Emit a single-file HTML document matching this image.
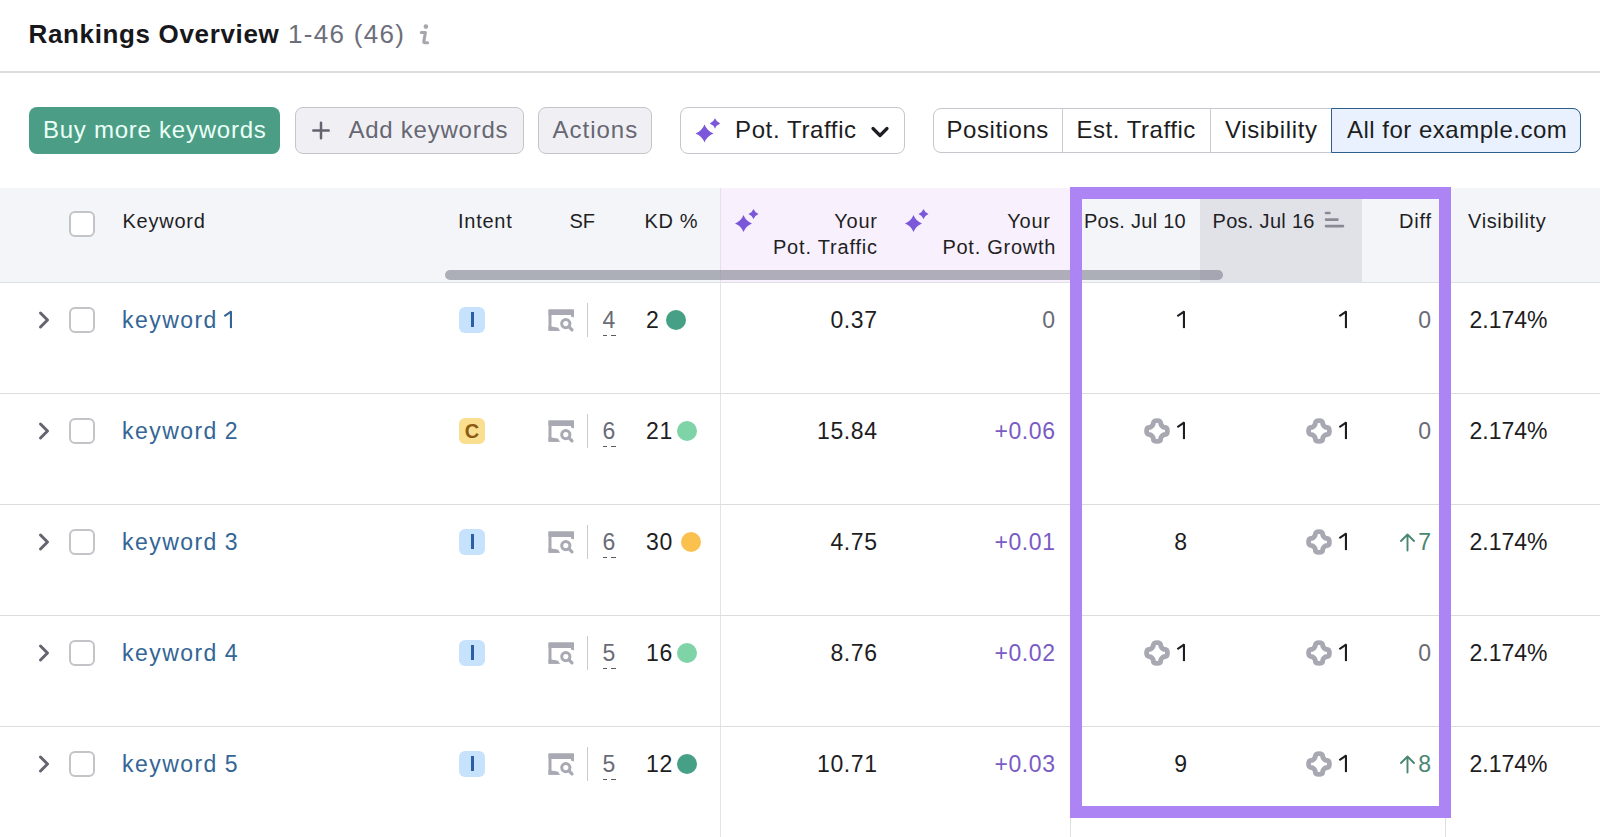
<!DOCTYPE html>
<html><head><meta charset="utf-8"><title>Rankings Overview</title>
<style>
html,body{margin:0;padding:0;background:#fff;width:1600px;height:837px;overflow:hidden;position:relative}
body{font-family:"Liberation Sans", sans-serif}
.t{position:absolute;white-space:nowrap;font-family:"Liberation Sans", sans-serif}
</style></head><body>
<div class="t" style="left:28.50px;top:21.49px;font-size:26px;line-height:26px;color:#17171c;font-weight:700;letter-spacing:0.65px;">Rankings Overview</div>
<div class="t" style="left:288.00px;top:21.49px;font-size:26px;line-height:26px;color:#6c6e79;font-weight:400;letter-spacing:1.3px;">1-46 (46)</div>
<svg style="position:absolute;left:417px;top:22px" width="14" height="24" viewBox="0 0 14 24"><circle cx="8.9" cy="4.6" r="2.3" fill="#a6a7ad"/><path d="M4.3 10.5 L8.4 10.5 L6.8 19.6 Q6.6 20.8 8 20.8 L10.6 20.8" stroke="#a6a7ad" stroke-width="3.1" fill="none" stroke-linecap="round" stroke-linejoin="round"/></svg>
<div style="position:absolute;left:0px;top:71px;width:1600px;height:1.5px;background:#dcdcdf"></div>
<div style="position:absolute;left:29px;top:107px;width:251px;height:46.5px;background:#4b9e85;border-radius:8px"></div>
<div class="t" style="left:43.00px;top:117.68px;font-size:24px;line-height:24px;color:#ecfff7;font-weight:400;letter-spacing:0.75px;">Buy more keywords</div>
<div style="position:absolute;left:294.5px;top:107px;width:229px;height:46.5px;background:#f0f0f4;border:1.6px solid #c4c4cb;border-radius:8px;box-sizing:border-box"></div>
<svg style="position:absolute;left:311px;top:121px" width="20" height="19" viewBox="0 0 20 19"><path d="M10 1.8 V17.2 M2.3 9.5 H17.7" stroke="#62636e" stroke-width="2.5" stroke-linecap="round"/></svg>
<div class="t" style="left:348.50px;top:117.68px;font-size:24px;line-height:24px;color:#666773;font-weight:400;letter-spacing:0.75px;">Add keywords</div>
<div style="position:absolute;left:538px;top:107px;width:114px;height:46.5px;background:#f0f0f4;border:1.6px solid #c4c4cb;border-radius:8px;box-sizing:border-box"></div>
<div class="t" style="left:552.50px;top:117.68px;font-size:24px;line-height:24px;color:#666773;font-weight:400;letter-spacing:1.0px;">Actions</div>
<div style="position:absolute;left:680px;top:107px;width:224.5px;height:46.5px;background:#ffffff;border:1.6px solid #c6c6cc;border-radius:8px;box-sizing:border-box"></div>
<svg style="position:absolute;left:694px;top:117px" width="30" height="28" viewBox="0 0 30 28"><path d="M10.5 7.5 Q13.02 13.98 19.5 16.5 Q13.02 19.02 10.5 25.5 Q7.9799999999999995 19.02 1.5 16.5 Q7.9799999999999995 13.98 10.5 7.5 Z" fill="#7b57d9"/><path d="M21 1.2999999999999998 Q22.456 5.044 26.2 6.5 Q22.456 7.956 21 11.7 Q19.544 7.956 15.8 6.5 Q19.544 5.044 21 1.2999999999999998 Z" fill="#7b57d9"/></svg>
<div class="t" style="left:735.00px;top:117.68px;font-size:24px;line-height:24px;color:#1d1d22;font-weight:400;letter-spacing:0.62px;">Pot. Traffic</div>
<svg style="position:absolute;left:870px;top:125px" width="20" height="14" viewBox="0 0 20 14"><path d="M3 3.5 L10 10.5 L17 3.5" stroke="#1d1d22" stroke-width="3.2" fill="none" stroke-linecap="round" stroke-linejoin="round"/></svg>
<div style="position:absolute;left:933px;top:107.5px;width:648px;height:45.5px;background:#fff;border:1.6px solid #c6c6cc;border-radius:8px;box-sizing:border-box"></div>
<div style="position:absolute;left:1061.5px;top:107.5px;width:1.5px;height:45.5px;background:#c9c9cf"></div>
<div style="position:absolute;left:1209.5px;top:107.5px;width:1.5px;height:45.5px;background:#c9c9cf"></div>
<div style="position:absolute;left:1330.5px;top:107.5px;width:250.5px;height:45.5px;background:#e8f1fd;border:1.6px solid #2d5f8c;border-radius:0 8px 8px 0;box-sizing:border-box"></div>
<div class="t" style="left:946.50px;top:117.68px;font-size:24px;line-height:24px;color:#1d1d22;font-weight:400;letter-spacing:0.55px;">Positions</div>
<div class="t" style="left:1076.50px;top:117.68px;font-size:24px;line-height:24px;color:#1d1d22;font-weight:400;letter-spacing:0.53px;">Est. Traffic</div>
<div class="t" style="left:1225.00px;top:117.68px;font-size:24px;line-height:24px;color:#1d1d22;font-weight:400;letter-spacing:0.65px;">Visibility</div>
<div class="t" style="left:1347.00px;top:117.68px;font-size:24px;line-height:24px;color:#1d1d22;font-weight:400;letter-spacing:0.5px;">All for example.com</div>
<div style="position:absolute;left:0px;top:187.5px;width:1600px;height:94.5px;background:#f4f5f9"></div>
<div style="position:absolute;left:720px;top:187.5px;width:350px;height:94.5px;background:#f8f1fd"></div>
<div style="position:absolute;left:1199.5px;top:187.5px;width:162px;height:94.5px;background:#e1e1e8"></div>
<div style="position:absolute;left:0px;top:282px;width:1600px;height:1px;background:#dfe0e6"></div>
<div style="position:absolute;left:719.5px;top:187.5px;width:1.5px;height:650px;background:#e3e3e8"></div>
<div style="position:absolute;left:69px;top:211px;width:26px;height:26px;background:#fff;border:2px solid #c3c3c8;border-radius:6px;box-sizing:border-box"></div>
<div class="t" style="left:122.50px;top:210.57px;font-size:20px;line-height:20px;color:#1f1f24;font-weight:400;letter-spacing:0.75px;">Keyword</div>
<div class="t" style="left:458.00px;top:210.57px;font-size:20px;line-height:20px;color:#1f1f24;font-weight:400;letter-spacing:0.75px;">Intent</div>
<div class="t" style="left:569.50px;top:210.57px;font-size:20px;line-height:20px;color:#1f1f24;font-weight:400;letter-spacing:0px;">SF</div>
<div class="t" style="left:644.50px;top:210.57px;font-size:20px;line-height:20px;color:#1f1f24;font-weight:400;letter-spacing:0.6px;">KD %</div>
<svg style="position:absolute;left:734px;top:208px" width="28" height="26" viewBox="0 0 28 26"><path d="M9.5 7.0 Q11.88 13.12 18.0 15.5 Q11.88 17.88 9.5 24.0 Q7.119999999999999 17.88 1.0 15.5 Q7.119999999999999 13.12 9.5 7.0 Z" fill="#7b57d9"/><path d="M19.5 1 Q20.9 4.6 24.5 6 Q20.9 7.4 19.5 11 Q18.1 7.4 14.5 6 Q18.1 4.6 19.5 1 Z" fill="#7b57d9"/></svg>
<div class="t" style="right:722.25px;text-align:right;top:210.57px;font-size:20px;line-height:20px;color:#1f1f24;font-weight:400;letter-spacing:0.75px;">Your</div>
<div class="t" style="right:722.20px;text-align:right;top:237.17px;font-size:20px;line-height:20px;color:#1f1f24;font-weight:400;letter-spacing:0.8px;">Pot. Traffic</div>
<svg style="position:absolute;left:904px;top:208px" width="28" height="26" viewBox="0 0 28 26"><path d="M9.5 7.0 Q11.88 13.12 18.0 15.5 Q11.88 17.88 9.5 24.0 Q7.119999999999999 17.88 1.0 15.5 Q7.119999999999999 13.12 9.5 7.0 Z" fill="#7b57d9"/><path d="M19.5 1 Q20.9 4.6 24.5 6 Q20.9 7.4 19.5 11 Q18.1 7.4 14.5 6 Q18.1 4.6 19.5 1 Z" fill="#7b57d9"/></svg>
<div class="t" style="right:549.25px;text-align:right;top:210.57px;font-size:20px;line-height:20px;color:#1f1f24;font-weight:400;letter-spacing:0.75px;">Your</div>
<div class="t" style="right:543.75px;text-align:right;top:237.17px;font-size:20px;line-height:20px;color:#1f1f24;font-weight:400;letter-spacing:0.75px;">Pot. Growth</div>
<div class="t" style="left:1084.00px;top:210.57px;font-size:20px;line-height:20px;color:#1f1f24;font-weight:400;letter-spacing:0.28px;">Pos. Jul 10</div>
<div class="t" style="left:1212.50px;top:210.57px;font-size:20px;line-height:20px;color:#1f1f24;font-weight:400;letter-spacing:0.3px;">Pos. Jul 16</div>
<svg style="position:absolute;left:1323px;top:209px" width="24" height="20" viewBox="0 0 24 20"><path d="M3 4 H6.5 M3 10.6 H14.5 M3 17.1 H20" stroke="#8a8a94" stroke-width="2.6" stroke-linecap="round"/></svg>
<div class="t" style="right:168.25px;text-align:right;top:210.57px;font-size:20px;line-height:20px;color:#1f1f24;font-weight:400;letter-spacing:0.75px;">Diff</div>
<div class="t" style="left:1468.00px;top:210.57px;font-size:20px;line-height:20px;color:#1f1f24;font-weight:400;letter-spacing:0.65px;">Visibility</div>
<div style="position:absolute;left:445px;top:270px;width:778px;height:10px;background:rgba(118,120,134,0.56);border-radius:5px"></div>
<div style="position:absolute;left:0px;top:393px;width:1600px;height:1px;background:#dcdce1"></div>
<div style="position:absolute;left:0px;top:504px;width:1600px;height:1px;background:#dcdce1"></div>
<div style="position:absolute;left:0px;top:615px;width:1600px;height:1px;background:#dcdce1"></div>
<div style="position:absolute;left:0px;top:726px;width:1600px;height:1px;background:#dcdce1"></div>
<svg style="position:absolute;left:36px;top:310px" width="16" height="20" viewBox="0 0 16 20"><path d="M4.5 3 L11.5 10 L4.5 17" stroke="#65656f" stroke-width="3" fill="none" stroke-linecap="round" stroke-linejoin="round"/></svg>
<div style="position:absolute;left:69px;top:307px;width:26px;height:26px;background:#fff;border:2px solid #c3c3c8;border-radius:6px;box-sizing:border-box"></div>
<div class="t" style="left:122.00px;top:308.73px;font-size:23px;line-height:23px;color:#336596;font-weight:400;letter-spacing:1.45px;">keyword</div>
<svg style="position:absolute;left:222.3px;top:308px" width="12" height="24" viewBox="0 0 12 24"><path d="M8.95 3.6 V20.1" stroke="#336596" stroke-width="2.1" stroke-linecap="butt"/><path d="M3.2 7.6 L8.55 3.9" stroke="#336596" stroke-width="2.1" stroke-linecap="square"/><rect x="7.90" y="3.4" width="2.1" height="1.2" fill="#336596"/></svg>
<div style="position:absolute;left:459px;top:307px;width:26px;height:26px;background:#c7e2fc;border-radius:6px"></div>
<div style="position:absolute;left:470.7px;top:312px;width:3px;height:14.5px;background:#2d5ea3"></div>
<svg style="position:absolute;left:547.5px;top:309px" width="27" height="24" viewBox="0 0 27 24"><path d="M10.5 20.2 H2 V2 H24.5 V7.8" stroke="#a9a9b3" stroke-width="3" fill="none" stroke-linejoin="miter"/><rect x="0.5" y="0.5" width="25.5" height="5.5" rx="1" fill="#a9a9b3"/><path d="M22 5 L25.5 5 L25.5 9 Z" fill="#a9a9b3"/><path d="M0.5 17 L0.5 21.7 L12.5 21.7 L9 18.5 Z" fill="#a9a9b3"/><circle cx="17.8" cy="14.6" r="4.1" stroke="#a9a9b3" stroke-width="3" fill="none"/><path d="M20.8 17.6 L24 20.8" stroke="#a9a9b3" stroke-width="3.2" stroke-linecap="round"/></svg>
<div style="position:absolute;left:586.5px;top:303px;width:1.5px;height:33.5px;background:#c9c9ce"></div>
<div class="t" style="left:602.50px;top:308.73px;font-size:23px;line-height:23px;color:#6a6b75;font-weight:400;letter-spacing:0px;">4</div>
<div style="position:absolute;left:602.5px;top:335px;width:4px;height:1.2px;background:#5a5a63"></div>
<div style="position:absolute;left:611px;top:335px;width:5px;height:1.2px;background:#5a5a63"></div>
<div class="t" style="left:646.00px;top:308.73px;font-size:23px;line-height:23px;color:#1d1d22;font-weight:400;letter-spacing:0.6px;">2</div>
<div style="position:absolute;left:666px;top:310px;width:20px;height:20px;background:#46a085;border-radius:50%"></div>
<div class="t" style="right:722.40px;text-align:right;top:308.73px;font-size:23px;line-height:23px;color:#1d1d22;font-weight:400;letter-spacing:0.6px;">0.37</div>
<div class="t" style="right:544.40px;text-align:right;top:308.73px;font-size:23px;line-height:23px;color:#6a6b75;font-weight:400;letter-spacing:0.6px;">0</div>
<svg style="position:absolute;left:1175.2px;top:308px" width="12" height="24" viewBox="0 0 12 24"><path d="M8.95 3.6 V20.1" stroke="#1d1d22" stroke-width="2.1" stroke-linecap="butt"/><path d="M3.2 7.6 L8.55 3.9" stroke="#1d1d22" stroke-width="2.1" stroke-linecap="square"/><rect x="7.90" y="3.4" width="2.1" height="1.2" fill="#1d1d22"/></svg>
<svg style="position:absolute;left:1337.2px;top:308px" width="12" height="24" viewBox="0 0 12 24"><path d="M8.95 3.6 V20.1" stroke="#1d1d22" stroke-width="2.1" stroke-linecap="butt"/><path d="M3.2 7.6 L8.55 3.9" stroke="#1d1d22" stroke-width="2.1" stroke-linecap="square"/><rect x="7.90" y="3.4" width="2.1" height="1.2" fill="#1d1d22"/></svg>
<div class="t" style="right:169.00px;text-align:right;top:308.73px;font-size:23px;line-height:23px;color:#6a6b75;font-weight:400;letter-spacing:0px;">0</div>
<div class="t" style="left:1469.50px;top:308.73px;font-size:23px;line-height:23px;color:#1d1d22;font-weight:400;letter-spacing:0px;">2.174%</div>
<svg style="position:absolute;left:36px;top:421px" width="16" height="20" viewBox="0 0 16 20"><path d="M4.5 3 L11.5 10 L4.5 17" stroke="#65656f" stroke-width="3" fill="none" stroke-linecap="round" stroke-linejoin="round"/></svg>
<div style="position:absolute;left:69px;top:418px;width:26px;height:26px;background:#fff;border:2px solid #c3c3c8;border-radius:6px;box-sizing:border-box"></div>
<div class="t" style="left:122.00px;top:419.73px;font-size:23px;line-height:23px;color:#336596;font-weight:400;letter-spacing:1.45px;">keyword</div>
<div class="t" style="right:1362.40px;text-align:right;top:419.73px;font-size:23px;line-height:23px;color:#336596;font-weight:400;letter-spacing:0px;">2</div>
<div style="position:absolute;left:459px;top:418px;width:26px;height:26px;background:#f9df8f;border-radius:6px"></div>
<div class="t" style="left:472.00px;top:421.47px;font-size:20px;line-height:20px;color:#8b5a12;font-weight:700;letter-spacing:0px;width:0;text-align:center;display:flex;justify-content:center">C</div>
<svg style="position:absolute;left:547.5px;top:420px" width="27" height="24" viewBox="0 0 27 24"><path d="M10.5 20.2 H2 V2 H24.5 V7.8" stroke="#a9a9b3" stroke-width="3" fill="none" stroke-linejoin="miter"/><rect x="0.5" y="0.5" width="25.5" height="5.5" rx="1" fill="#a9a9b3"/><path d="M22 5 L25.5 5 L25.5 9 Z" fill="#a9a9b3"/><path d="M0.5 17 L0.5 21.7 L12.5 21.7 L9 18.5 Z" fill="#a9a9b3"/><circle cx="17.8" cy="14.6" r="4.1" stroke="#a9a9b3" stroke-width="3" fill="none"/><path d="M20.8 17.6 L24 20.8" stroke="#a9a9b3" stroke-width="3.2" stroke-linecap="round"/></svg>
<div style="position:absolute;left:586.5px;top:414px;width:1.5px;height:33.5px;background:#c9c9ce"></div>
<div class="t" style="left:602.50px;top:419.73px;font-size:23px;line-height:23px;color:#6a6b75;font-weight:400;letter-spacing:0px;">6</div>
<div style="position:absolute;left:602.5px;top:446px;width:4px;height:1.2px;background:#5a5a63"></div>
<div style="position:absolute;left:611px;top:446px;width:5px;height:1.2px;background:#5a5a63"></div>
<div class="t" style="left:646.00px;top:419.73px;font-size:23px;line-height:23px;color:#1d1d22;font-weight:400;letter-spacing:0.6px;">21</div>
<div style="position:absolute;left:677px;top:421px;width:20px;height:20px;background:#7ed4a6;border-radius:50%"></div>
<div class="t" style="right:722.40px;text-align:right;top:419.73px;font-size:23px;line-height:23px;color:#1d1d22;font-weight:400;letter-spacing:0.6px;">15.84</div>
<div class="t" style="right:544.40px;text-align:right;top:419.73px;font-size:23px;line-height:23px;color:#7a5bc4;font-weight:400;letter-spacing:0.6px;">+0.06</div>
<svg style="position:absolute;left:1141.5px;top:416px" width="30" height="30" viewBox="0 0 30 30"><path d="M11.20 8.00 C11.20 5.11 12.91 4.60 15.00 4.60 C17.09 4.60 18.80 5.11 18.80 8.00 C18.90 9.00 21.00 11.10 22.00 11.20 C24.89 11.20 25.40 12.91 25.40 15.00 C25.40 17.09 24.89 18.80 22.00 18.80 C21.00 18.90 18.90 21.00 18.80 22.00 C18.80 24.89 17.09 25.40 15.00 25.40 C12.91 25.40 11.20 24.89 11.20 22.00 C11.10 21.00 9.00 18.90 8.00 18.80 C5.11 18.80 4.60 17.09 4.60 15.00 C4.60 12.91 5.11 11.20 8.00 11.20 C9.00 11.10 11.10 9.00 11.20 8.00 Z" stroke="#a8a8b2" stroke-width="4.9" fill="none" stroke-linejoin="round"/></svg>
<svg style="position:absolute;left:1175.2px;top:419px" width="12" height="24" viewBox="0 0 12 24"><path d="M8.95 3.6 V20.1" stroke="#1d1d22" stroke-width="2.1" stroke-linecap="butt"/><path d="M3.2 7.6 L8.55 3.9" stroke="#1d1d22" stroke-width="2.1" stroke-linecap="square"/><rect x="7.90" y="3.4" width="2.1" height="1.2" fill="#1d1d22"/></svg>
<svg style="position:absolute;left:1303.5px;top:416px" width="30" height="30" viewBox="0 0 30 30"><path d="M11.20 8.00 C11.20 5.11 12.91 4.60 15.00 4.60 C17.09 4.60 18.80 5.11 18.80 8.00 C18.90 9.00 21.00 11.10 22.00 11.20 C24.89 11.20 25.40 12.91 25.40 15.00 C25.40 17.09 24.89 18.80 22.00 18.80 C21.00 18.90 18.90 21.00 18.80 22.00 C18.80 24.89 17.09 25.40 15.00 25.40 C12.91 25.40 11.20 24.89 11.20 22.00 C11.10 21.00 9.00 18.90 8.00 18.80 C5.11 18.80 4.60 17.09 4.60 15.00 C4.60 12.91 5.11 11.20 8.00 11.20 C9.00 11.10 11.10 9.00 11.20 8.00 Z" stroke="#a8a8b2" stroke-width="4.9" fill="none" stroke-linejoin="round"/></svg>
<svg style="position:absolute;left:1337.2px;top:419px" width="12" height="24" viewBox="0 0 12 24"><path d="M8.95 3.6 V20.1" stroke="#1d1d22" stroke-width="2.1" stroke-linecap="butt"/><path d="M3.2 7.6 L8.55 3.9" stroke="#1d1d22" stroke-width="2.1" stroke-linecap="square"/><rect x="7.90" y="3.4" width="2.1" height="1.2" fill="#1d1d22"/></svg>
<div class="t" style="right:169.00px;text-align:right;top:419.73px;font-size:23px;line-height:23px;color:#6a6b75;font-weight:400;letter-spacing:0px;">0</div>
<div class="t" style="left:1469.50px;top:419.73px;font-size:23px;line-height:23px;color:#1d1d22;font-weight:400;letter-spacing:0px;">2.174%</div>
<svg style="position:absolute;left:36px;top:532px" width="16" height="20" viewBox="0 0 16 20"><path d="M4.5 3 L11.5 10 L4.5 17" stroke="#65656f" stroke-width="3" fill="none" stroke-linecap="round" stroke-linejoin="round"/></svg>
<div style="position:absolute;left:69px;top:529px;width:26px;height:26px;background:#fff;border:2px solid #c3c3c8;border-radius:6px;box-sizing:border-box"></div>
<div class="t" style="left:122.00px;top:530.73px;font-size:23px;line-height:23px;color:#336596;font-weight:400;letter-spacing:1.45px;">keyword</div>
<div class="t" style="right:1362.40px;text-align:right;top:530.73px;font-size:23px;line-height:23px;color:#336596;font-weight:400;letter-spacing:0px;">3</div>
<div style="position:absolute;left:459px;top:529px;width:26px;height:26px;background:#c7e2fc;border-radius:6px"></div>
<div style="position:absolute;left:470.7px;top:534px;width:3px;height:14.5px;background:#2d5ea3"></div>
<svg style="position:absolute;left:547.5px;top:531px" width="27" height="24" viewBox="0 0 27 24"><path d="M10.5 20.2 H2 V2 H24.5 V7.8" stroke="#a9a9b3" stroke-width="3" fill="none" stroke-linejoin="miter"/><rect x="0.5" y="0.5" width="25.5" height="5.5" rx="1" fill="#a9a9b3"/><path d="M22 5 L25.5 5 L25.5 9 Z" fill="#a9a9b3"/><path d="M0.5 17 L0.5 21.7 L12.5 21.7 L9 18.5 Z" fill="#a9a9b3"/><circle cx="17.8" cy="14.6" r="4.1" stroke="#a9a9b3" stroke-width="3" fill="none"/><path d="M20.8 17.6 L24 20.8" stroke="#a9a9b3" stroke-width="3.2" stroke-linecap="round"/></svg>
<div style="position:absolute;left:586.5px;top:525px;width:1.5px;height:33.5px;background:#c9c9ce"></div>
<div class="t" style="left:602.50px;top:530.73px;font-size:23px;line-height:23px;color:#6a6b75;font-weight:400;letter-spacing:0px;">6</div>
<div style="position:absolute;left:602.5px;top:557px;width:4px;height:1.2px;background:#5a5a63"></div>
<div style="position:absolute;left:611px;top:557px;width:5px;height:1.2px;background:#5a5a63"></div>
<div class="t" style="left:646.00px;top:530.73px;font-size:23px;line-height:23px;color:#1d1d22;font-weight:400;letter-spacing:0.6px;">30</div>
<div style="position:absolute;left:681px;top:532px;width:20px;height:20px;background:#fbc14f;border-radius:50%"></div>
<div class="t" style="right:722.40px;text-align:right;top:530.73px;font-size:23px;line-height:23px;color:#1d1d22;font-weight:400;letter-spacing:0.6px;">4.75</div>
<div class="t" style="right:544.40px;text-align:right;top:530.73px;font-size:23px;line-height:23px;color:#7a5bc4;font-weight:400;letter-spacing:0.6px;">+0.01</div>
<div class="t" style="right:413.00px;text-align:right;top:530.73px;font-size:23px;line-height:23px;color:#1d1d22;font-weight:400;letter-spacing:0px;">8</div>
<svg style="position:absolute;left:1303.5px;top:527px" width="30" height="30" viewBox="0 0 30 30"><path d="M11.20 8.00 C11.20 5.11 12.91 4.60 15.00 4.60 C17.09 4.60 18.80 5.11 18.80 8.00 C18.90 9.00 21.00 11.10 22.00 11.20 C24.89 11.20 25.40 12.91 25.40 15.00 C25.40 17.09 24.89 18.80 22.00 18.80 C21.00 18.90 18.90 21.00 18.80 22.00 C18.80 24.89 17.09 25.40 15.00 25.40 C12.91 25.40 11.20 24.89 11.20 22.00 C11.10 21.00 9.00 18.90 8.00 18.80 C5.11 18.80 4.60 17.09 4.60 15.00 C4.60 12.91 5.11 11.20 8.00 11.20 C9.00 11.10 11.10 9.00 11.20 8.00 Z" stroke="#a8a8b2" stroke-width="4.9" fill="none" stroke-linejoin="round"/></svg>
<svg style="position:absolute;left:1337.2px;top:530px" width="12" height="24" viewBox="0 0 12 24"><path d="M8.95 3.6 V20.1" stroke="#1d1d22" stroke-width="2.1" stroke-linecap="butt"/><path d="M3.2 7.6 L8.55 3.9" stroke="#1d1d22" stroke-width="2.1" stroke-linecap="square"/><rect x="7.90" y="3.4" width="2.1" height="1.2" fill="#1d1d22"/></svg>
<svg style="position:absolute;left:1399px;top:532px" width="17" height="20" viewBox="0 0 17 20"><path d="M8.5 18.5 V2.5 M2 9 L8.5 2.5 L15 9" stroke="#4a8670" stroke-width="1.9" fill="none" stroke-linecap="round" stroke-linejoin="round"/></svg>
<div class="t" style="right:169.00px;text-align:right;top:530.73px;font-size:23px;line-height:23px;color:#4a8670;font-weight:400;letter-spacing:0px;">7</div>
<div class="t" style="left:1469.50px;top:530.73px;font-size:23px;line-height:23px;color:#1d1d22;font-weight:400;letter-spacing:0px;">2.174%</div>
<svg style="position:absolute;left:36px;top:643px" width="16" height="20" viewBox="0 0 16 20"><path d="M4.5 3 L11.5 10 L4.5 17" stroke="#65656f" stroke-width="3" fill="none" stroke-linecap="round" stroke-linejoin="round"/></svg>
<div style="position:absolute;left:69px;top:640px;width:26px;height:26px;background:#fff;border:2px solid #c3c3c8;border-radius:6px;box-sizing:border-box"></div>
<div class="t" style="left:122.00px;top:641.73px;font-size:23px;line-height:23px;color:#336596;font-weight:400;letter-spacing:1.45px;">keyword</div>
<div class="t" style="right:1362.40px;text-align:right;top:641.73px;font-size:23px;line-height:23px;color:#336596;font-weight:400;letter-spacing:0px;">4</div>
<div style="position:absolute;left:459px;top:640px;width:26px;height:26px;background:#c7e2fc;border-radius:6px"></div>
<div style="position:absolute;left:470.7px;top:645px;width:3px;height:14.5px;background:#2d5ea3"></div>
<svg style="position:absolute;left:547.5px;top:642px" width="27" height="24" viewBox="0 0 27 24"><path d="M10.5 20.2 H2 V2 H24.5 V7.8" stroke="#a9a9b3" stroke-width="3" fill="none" stroke-linejoin="miter"/><rect x="0.5" y="0.5" width="25.5" height="5.5" rx="1" fill="#a9a9b3"/><path d="M22 5 L25.5 5 L25.5 9 Z" fill="#a9a9b3"/><path d="M0.5 17 L0.5 21.7 L12.5 21.7 L9 18.5 Z" fill="#a9a9b3"/><circle cx="17.8" cy="14.6" r="4.1" stroke="#a9a9b3" stroke-width="3" fill="none"/><path d="M20.8 17.6 L24 20.8" stroke="#a9a9b3" stroke-width="3.2" stroke-linecap="round"/></svg>
<div style="position:absolute;left:586.5px;top:636px;width:1.5px;height:33.5px;background:#c9c9ce"></div>
<div class="t" style="left:602.50px;top:641.73px;font-size:23px;line-height:23px;color:#6a6b75;font-weight:400;letter-spacing:0px;">5</div>
<div style="position:absolute;left:602.5px;top:668px;width:4px;height:1.2px;background:#5a5a63"></div>
<div style="position:absolute;left:611px;top:668px;width:5px;height:1.2px;background:#5a5a63"></div>
<div class="t" style="left:646.00px;top:641.73px;font-size:23px;line-height:23px;color:#1d1d22;font-weight:400;letter-spacing:0.6px;">16</div>
<div style="position:absolute;left:677px;top:643px;width:20px;height:20px;background:#7ed4a6;border-radius:50%"></div>
<div class="t" style="right:722.40px;text-align:right;top:641.73px;font-size:23px;line-height:23px;color:#1d1d22;font-weight:400;letter-spacing:0.6px;">8.76</div>
<div class="t" style="right:544.40px;text-align:right;top:641.73px;font-size:23px;line-height:23px;color:#7a5bc4;font-weight:400;letter-spacing:0.6px;">+0.02</div>
<svg style="position:absolute;left:1141.5px;top:638px" width="30" height="30" viewBox="0 0 30 30"><path d="M11.20 8.00 C11.20 5.11 12.91 4.60 15.00 4.60 C17.09 4.60 18.80 5.11 18.80 8.00 C18.90 9.00 21.00 11.10 22.00 11.20 C24.89 11.20 25.40 12.91 25.40 15.00 C25.40 17.09 24.89 18.80 22.00 18.80 C21.00 18.90 18.90 21.00 18.80 22.00 C18.80 24.89 17.09 25.40 15.00 25.40 C12.91 25.40 11.20 24.89 11.20 22.00 C11.10 21.00 9.00 18.90 8.00 18.80 C5.11 18.80 4.60 17.09 4.60 15.00 C4.60 12.91 5.11 11.20 8.00 11.20 C9.00 11.10 11.10 9.00 11.20 8.00 Z" stroke="#a8a8b2" stroke-width="4.9" fill="none" stroke-linejoin="round"/></svg>
<svg style="position:absolute;left:1175.2px;top:641px" width="12" height="24" viewBox="0 0 12 24"><path d="M8.95 3.6 V20.1" stroke="#1d1d22" stroke-width="2.1" stroke-linecap="butt"/><path d="M3.2 7.6 L8.55 3.9" stroke="#1d1d22" stroke-width="2.1" stroke-linecap="square"/><rect x="7.90" y="3.4" width="2.1" height="1.2" fill="#1d1d22"/></svg>
<svg style="position:absolute;left:1303.5px;top:638px" width="30" height="30" viewBox="0 0 30 30"><path d="M11.20 8.00 C11.20 5.11 12.91 4.60 15.00 4.60 C17.09 4.60 18.80 5.11 18.80 8.00 C18.90 9.00 21.00 11.10 22.00 11.20 C24.89 11.20 25.40 12.91 25.40 15.00 C25.40 17.09 24.89 18.80 22.00 18.80 C21.00 18.90 18.90 21.00 18.80 22.00 C18.80 24.89 17.09 25.40 15.00 25.40 C12.91 25.40 11.20 24.89 11.20 22.00 C11.10 21.00 9.00 18.90 8.00 18.80 C5.11 18.80 4.60 17.09 4.60 15.00 C4.60 12.91 5.11 11.20 8.00 11.20 C9.00 11.10 11.10 9.00 11.20 8.00 Z" stroke="#a8a8b2" stroke-width="4.9" fill="none" stroke-linejoin="round"/></svg>
<svg style="position:absolute;left:1337.2px;top:641px" width="12" height="24" viewBox="0 0 12 24"><path d="M8.95 3.6 V20.1" stroke="#1d1d22" stroke-width="2.1" stroke-linecap="butt"/><path d="M3.2 7.6 L8.55 3.9" stroke="#1d1d22" stroke-width="2.1" stroke-linecap="square"/><rect x="7.90" y="3.4" width="2.1" height="1.2" fill="#1d1d22"/></svg>
<div class="t" style="right:169.00px;text-align:right;top:641.73px;font-size:23px;line-height:23px;color:#6a6b75;font-weight:400;letter-spacing:0px;">0</div>
<div class="t" style="left:1469.50px;top:641.73px;font-size:23px;line-height:23px;color:#1d1d22;font-weight:400;letter-spacing:0px;">2.174%</div>
<svg style="position:absolute;left:36px;top:754px" width="16" height="20" viewBox="0 0 16 20"><path d="M4.5 3 L11.5 10 L4.5 17" stroke="#65656f" stroke-width="3" fill="none" stroke-linecap="round" stroke-linejoin="round"/></svg>
<div style="position:absolute;left:69px;top:751px;width:26px;height:26px;background:#fff;border:2px solid #c3c3c8;border-radius:6px;box-sizing:border-box"></div>
<div class="t" style="left:122.00px;top:752.73px;font-size:23px;line-height:23px;color:#336596;font-weight:400;letter-spacing:1.45px;">keyword</div>
<div class="t" style="right:1362.40px;text-align:right;top:752.73px;font-size:23px;line-height:23px;color:#336596;font-weight:400;letter-spacing:0px;">5</div>
<div style="position:absolute;left:459px;top:751px;width:26px;height:26px;background:#c7e2fc;border-radius:6px"></div>
<div style="position:absolute;left:470.7px;top:756px;width:3px;height:14.5px;background:#2d5ea3"></div>
<svg style="position:absolute;left:547.5px;top:753px" width="27" height="24" viewBox="0 0 27 24"><path d="M10.5 20.2 H2 V2 H24.5 V7.8" stroke="#a9a9b3" stroke-width="3" fill="none" stroke-linejoin="miter"/><rect x="0.5" y="0.5" width="25.5" height="5.5" rx="1" fill="#a9a9b3"/><path d="M22 5 L25.5 5 L25.5 9 Z" fill="#a9a9b3"/><path d="M0.5 17 L0.5 21.7 L12.5 21.7 L9 18.5 Z" fill="#a9a9b3"/><circle cx="17.8" cy="14.6" r="4.1" stroke="#a9a9b3" stroke-width="3" fill="none"/><path d="M20.8 17.6 L24 20.8" stroke="#a9a9b3" stroke-width="3.2" stroke-linecap="round"/></svg>
<div style="position:absolute;left:586.5px;top:747px;width:1.5px;height:33.5px;background:#c9c9ce"></div>
<div class="t" style="left:602.50px;top:752.73px;font-size:23px;line-height:23px;color:#6a6b75;font-weight:400;letter-spacing:0px;">5</div>
<div style="position:absolute;left:602.5px;top:779px;width:4px;height:1.2px;background:#5a5a63"></div>
<div style="position:absolute;left:611px;top:779px;width:5px;height:1.2px;background:#5a5a63"></div>
<div class="t" style="left:646.00px;top:752.73px;font-size:23px;line-height:23px;color:#1d1d22;font-weight:400;letter-spacing:0.6px;">12</div>
<div style="position:absolute;left:677px;top:754px;width:20px;height:20px;background:#46a085;border-radius:50%"></div>
<div class="t" style="right:722.40px;text-align:right;top:752.73px;font-size:23px;line-height:23px;color:#1d1d22;font-weight:400;letter-spacing:0.6px;">10.71</div>
<div class="t" style="right:544.40px;text-align:right;top:752.73px;font-size:23px;line-height:23px;color:#7a5bc4;font-weight:400;letter-spacing:0.6px;">+0.03</div>
<div class="t" style="right:413.00px;text-align:right;top:752.73px;font-size:23px;line-height:23px;color:#1d1d22;font-weight:400;letter-spacing:0px;">9</div>
<svg style="position:absolute;left:1303.5px;top:749px" width="30" height="30" viewBox="0 0 30 30"><path d="M11.20 8.00 C11.20 5.11 12.91 4.60 15.00 4.60 C17.09 4.60 18.80 5.11 18.80 8.00 C18.90 9.00 21.00 11.10 22.00 11.20 C24.89 11.20 25.40 12.91 25.40 15.00 C25.40 17.09 24.89 18.80 22.00 18.80 C21.00 18.90 18.90 21.00 18.80 22.00 C18.80 24.89 17.09 25.40 15.00 25.40 C12.91 25.40 11.20 24.89 11.20 22.00 C11.10 21.00 9.00 18.90 8.00 18.80 C5.11 18.80 4.60 17.09 4.60 15.00 C4.60 12.91 5.11 11.20 8.00 11.20 C9.00 11.10 11.10 9.00 11.20 8.00 Z" stroke="#a8a8b2" stroke-width="4.9" fill="none" stroke-linejoin="round"/></svg>
<svg style="position:absolute;left:1337.2px;top:752px" width="12" height="24" viewBox="0 0 12 24"><path d="M8.95 3.6 V20.1" stroke="#1d1d22" stroke-width="2.1" stroke-linecap="butt"/><path d="M3.2 7.6 L8.55 3.9" stroke="#1d1d22" stroke-width="2.1" stroke-linecap="square"/><rect x="7.90" y="3.4" width="2.1" height="1.2" fill="#1d1d22"/></svg>
<svg style="position:absolute;left:1399px;top:754px" width="17" height="20" viewBox="0 0 17 20"><path d="M8.5 18.5 V2.5 M2 9 L8.5 2.5 L15 9" stroke="#4a8670" stroke-width="1.9" fill="none" stroke-linecap="round" stroke-linejoin="round"/></svg>
<div class="t" style="right:169.00px;text-align:right;top:752.73px;font-size:23px;line-height:23px;color:#4a8670;font-weight:400;letter-spacing:0px;">8</div>
<div class="t" style="left:1469.50px;top:752.73px;font-size:23px;line-height:23px;color:#1d1d22;font-weight:400;letter-spacing:0px;">2.174%</div>
<div style="position:absolute;left:1069.5px;top:817px;width:1.5px;height:20px;background:#dedee3"></div>
<div style="position:absolute;left:1445px;top:817px;width:1px;height:20px;background:#dedee3"></div>
<div style="position:absolute;left:1070px;top:186.5px;width:381px;height:631px;border:12.3px solid #ad84f3;box-sizing:border-box"></div>
</body></html>
